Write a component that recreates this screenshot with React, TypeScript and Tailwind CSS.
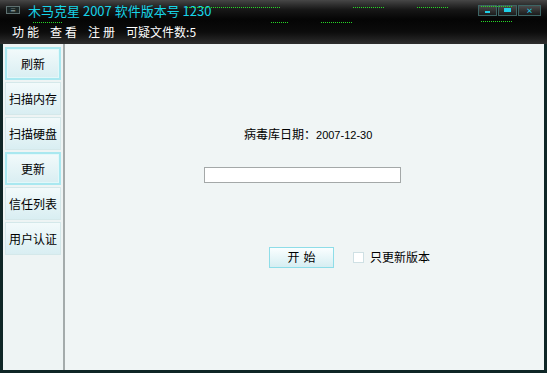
import { useState } from 'react'

const CJK = '"Noto Sans CJK SC", "DejaVu Sans", sans-serif'

const NAV = [
  { label: '刷新', active: true },
  { label: '扫描内存', active: false },
  { label: '扫描硬盘', active: false },
  { label: '更新', active: true },
  { label: '信任列表', active: false },
  { label: '用户认证', active: false },
]

function Dots({ className }: { className: string }) {
  return (
    <div
      className={`absolute h-[1px] bg-[repeating-linear-gradient(90deg,#27d827_0_1px,transparent_1px_2px)] ${className}`}
    />
  )
}

function WinButton({ children, wide }: { children: React.ReactNode; wide?: boolean }) {
  return (
    <div
      className={`${wide ? 'w-[23px]' : 'w-[19px]'} h-[11px] border border-[#3d6464] bg-gradient-to-b from-[#4a4a4a] to-[#1c1c1c] flex items-center justify-center`}
    >
      {children}
    </div>
  )
}

export default function App() {
  const [onlyVersion, setOnlyVersion] = useState(false)

  return (
    <div className="w-[547px] h-[373px] bg-[#0f2626] flex flex-col overflow-hidden" style={{ fontFamily: CJK }}>
      {/* title bar */}
      <div className="relative h-[20px] shrink-0 bg-gradient-to-b from-[#474747] via-[#161616] to-[#050505] flex items-center">
        <div className="ml-[6px] w-[14px] h-[8px] border border-[#5e7070] bg-[#1b2727] flex items-center justify-center">
          <span className="text-[6px] leading-none text-[#c8d8d8]">≡</span>
        </div>
        <span className="ml-[8px] text-[13px] leading-none text-[#17d4e8]">木马克星 2007 软件版本号 1230</span>
        <div className="ml-auto mr-[6px] flex gap-[1px]">
          <WinButton>
            <div className="w-[5px] h-[2px] bg-[#20d0e8] mt-[3px]" />
          </WinButton>
          <WinButton>
            <div className="w-[7px] h-[4px] border-2 border-[#20d0e8]" />
          </WinButton>
          <WinButton wide>
            <span className="text-[7px] leading-none font-bold text-[#20d0e8]">×</span>
          </WinButton>
        </div>
        <Dots className="left-[187px] top-[7px] w-[93px]" />
        <Dots className="left-[353px] top-[7px] w-[31px]" />
        <Dots className="left-[417px] top-[7px] w-[31px]" />
        <Dots className="left-[481px] top-[6px] w-[31px]" />
      </div>

      {/* menu bar */}
      <div className="relative h-[24px] shrink-0 bg-gradient-to-b from-[#050505] via-[#0c0c0c] to-[#2e2e2e] flex items-center pl-[12px] pb-[1px] gap-[8px] text-[12px] leading-none text-white">
        <span className="tracking-[3px]">功能</span>
        <span className="tracking-[3px]">查看</span>
        <span className="tracking-[3px]">注册</span>
        <span>可疑文件数:5</span>
        <Dots className="left-[33px] top-[2px] w-[30px]" />
        <Dots className="left-[271px] top-[2px] w-[17px]" />
        <Dots className="left-[321px] top-[2px] w-[31px]" />
        <Dots className="left-[481px] top-[1px] w-[31px]" />
      </div>

      {/* body */}
      <div className="flex-1 flex pl-[3px] pr-[3px] pb-[3px] min-h-0">
        <div className="w-[62px] shrink-0 bg-[#eef4f4] border-r-2 border-[#a4abab] flex flex-col gap-[2px] pt-[3px] pl-[2px] pr-[2px]">
          {NAV.map((item) => (
            <button
              key={item.label}
              type="button"
              className={`h-[33px] w-full flex items-center justify-center text-[12px] text-black bg-gradient-to-b from-[#f2fafb] to-[#d9eef2] ${
                item.active
                  ? 'border-2 border-[#a9e8f0] shadow-[inset_0_0_0_1px_#e2f8fa]'
                  : 'border border-[#d4e8ea]'
              }`}
            >
              {item.label}
            </button>
          ))}
        </div>

        <div className="flex-1 bg-[#f0f5f5] flex flex-col items-start">
          <div className="mt-[81px] ml-[179px] flex items-baseline text-[12px] text-black">
            <span>病毒库日期：</span>
            <span className="text-[11px]" style={{ fontFamily: '"Liberation Sans", sans-serif' }}>2007-12-30</span>
          </div>
          <div className="mt-[23px] ml-[139px] w-[197px] h-[16px] bg-white border border-[#a4a8a8]" />
          <div className="mt-[64px] ml-[204px] flex items-center">
            <button
              type="button"
              className="w-[65px] h-[21px] border border-[#8edde8] bg-gradient-to-b from-[#fafeff] to-[#d6eef2] text-[12px] leading-none tracking-[4px] pl-[4px] text-black flex items-center justify-center"
            >
              开始
            </button>
            <label className="ml-[19px] flex items-center gap-[6px] text-[12px] text-black">
              <input
                type="checkbox"
                checked={onlyVersion}
                onChange={(e) => setOnlyVersion(e.target.checked)}
                className="appearance-none w-[11px] h-[11px] bg-white border border-[#cfe0e4]"
              />
              只更新版本
            </label>
          </div>
        </div>
      </div>
    </div>
  )
}
